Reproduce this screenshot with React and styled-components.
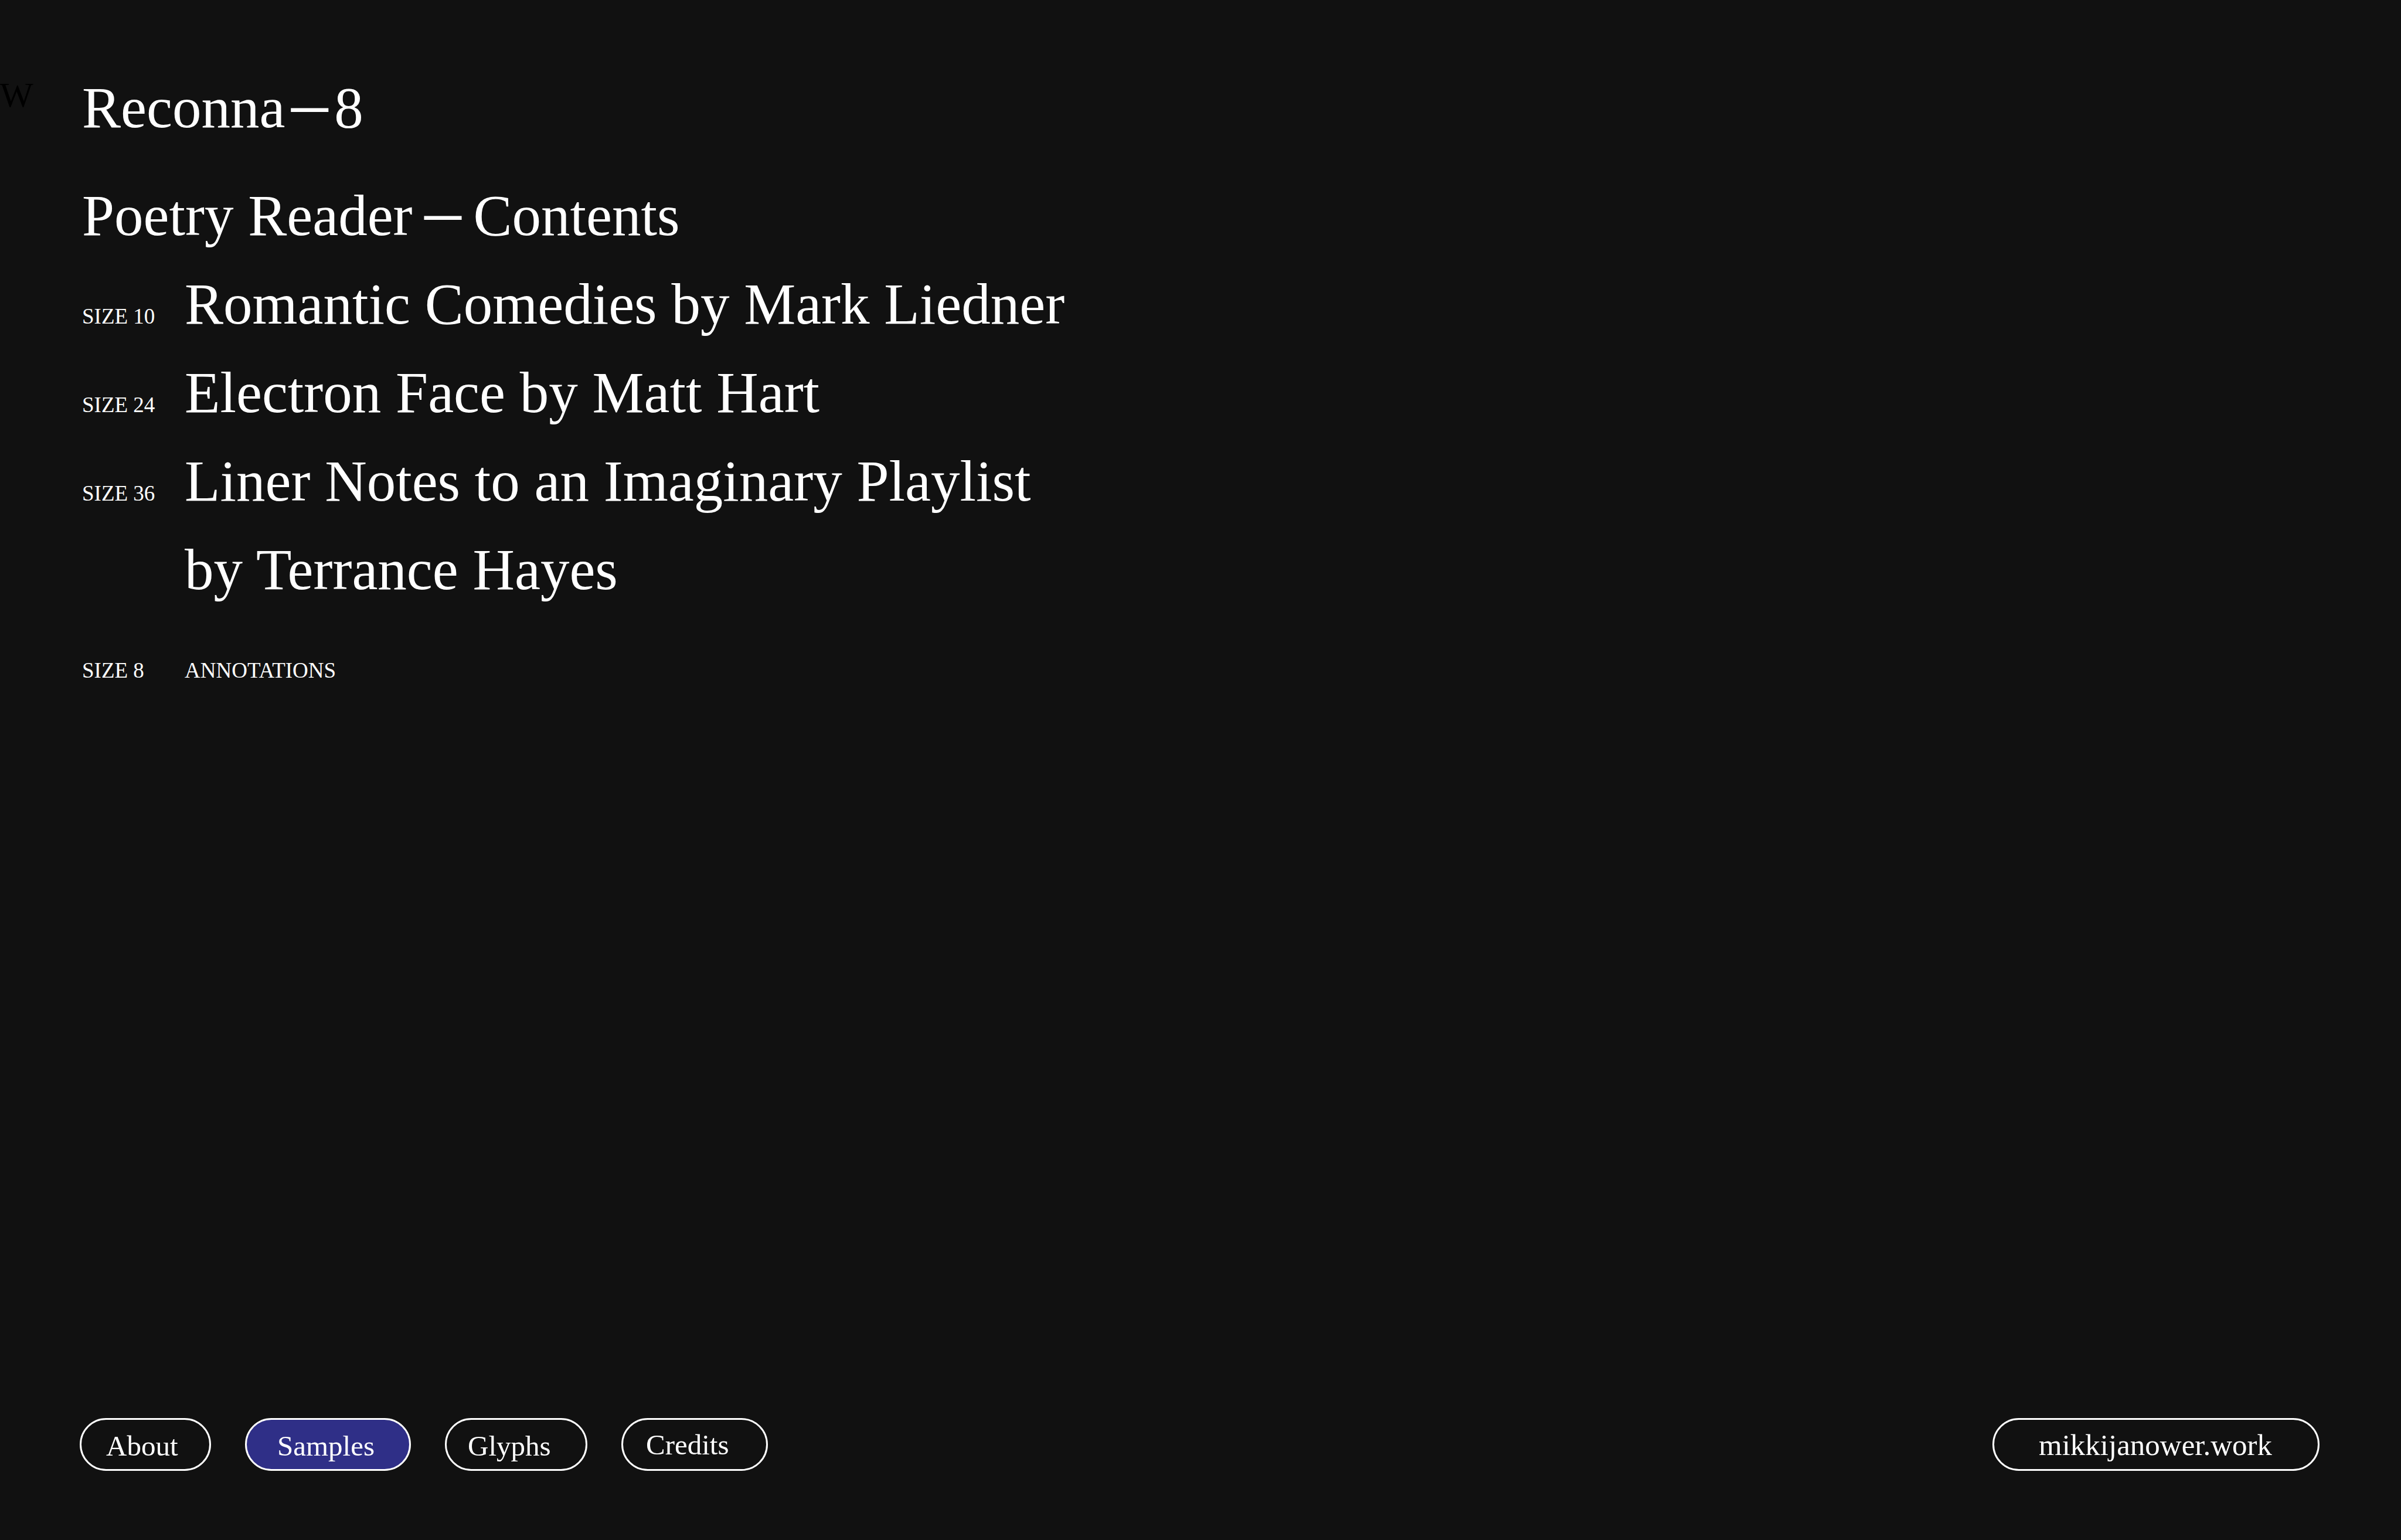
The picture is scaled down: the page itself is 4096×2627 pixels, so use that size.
import React from "react";
import styled, { createGlobalStyle } from "styled-components";

const GlobalStyle = createGlobalStyle`
  *, *::before, *::after { box-sizing: border-box; }
  body {
    margin: 0;
    background: #111111;
    color: #ffffff;
    font-family: "Liberation Serif", "Times New Roman", serif;
  }
`;

const Page = styled.div`
  min-height: 100vh;
  display: flex;
  flex-direction: column;
  padding: 108px 139px 118px 0;
`;

const Header = styled.header`
  display: grid;
  grid-template-columns: 140px 1fr;
  align-items: start;
`;

const Mark = styled.span`
  color: #000000;
  font-size: 60px;
  line-height: 108px;
`;

const Title = styled.h1`
  margin: 0;
  font-size: 99px;
  font-weight: 400;
  line-height: 151px;
`;

const Dash = styled.span`
  margin: 0 ${(p) => p.$space}px;
  font-family: "Liberation Sans", Arial, sans-serif;
  font-size: 64px;
  font-weight: 700;
  line-height: 1;
  vertical-align: 12px;
`;

const Contents = styled.main`
  padding: 33px 0 0 140px;
`;

const Heading = styled(Title).attrs({ as: "h2" })``;

const List = styled.ul`
  margin: 0;
  padding: 0;
  list-style: none;
  font-size: 99px;
  line-height: 151px;
`;

const Row = styled.li`
  display: grid;
  grid-template-columns: 175px 1fr;
  align-items: baseline;
`;

const Small = styled.span`
  font-size: 37px;
  line-height: 1;
`;

const Entry = styled.a`
  color: inherit;
  text-decoration: none;
`;

const Footer = styled.footer`
  margin-top: auto;
  padding-left: 136px;
  display: flex;
  justify-content: space-between;
`;

const Nav = styled.nav`
  display: flex;
  gap: 58px;
`;

const Pill = styled.a`
  width: ${(p) => p.$width}px;
  height: 90px;
  padding-left: ${(p) => p.$inset}px;
  border: 3px solid #ffffff;
  border-radius: 45px;
  background: ${(p) => (p.$active ? "#2f2f87" : "transparent")};
  color: inherit;
  font-size: ${(p) => (p.$wide ? 51 : 49)}px;
  line-height: ${(p) => (p.$raised ? 86 : 90)}px;
  text-decoration: none;
  white-space: nowrap;
`;

const entries = [
  { size: 10, text: "Romantic Comedies by Mark Liedner" },
  { size: 24, text: "Electron Face by Matt Hart" },
  {
    size: 36,
    text: (
      <>
        Liner Notes to an Imaginary Playlist
        <br />
        by Terrance Hayes
      </>
    ),
  },
  { size: 8, text: <Small>ANNOTATIONS</Small> },
];

const links = [
  { label: "About", width: 224, inset: 42 },
  { label: "Samples", width: 283, inset: 52, active: true },
  { label: "Glyphs", width: 243, inset: 36 },
  { label: "Credits", width: 250, inset: 39, raised: true },
];

export default function App() {
  return (
    <>
      <GlobalStyle />
      <Page>
        <Header>
          <Mark>W</Mark>
          <Title>
            Reconna<Dash $space={10}>—</Dash>8
          </Title>
        </Header>
        <Contents>
          <Heading>
            Poetry Reader<Dash $space={20}>—</Dash>Contents
          </Heading>
          <List>
            {entries.map((entry) => (
              <Row key={entry.size}>
                <Small>SIZE {entry.size}</Small>
                <div>
                  <Entry href={`#size-${entry.size}`}>{entry.text}</Entry>
                </div>
              </Row>
            ))}
          </List>
        </Contents>
        <Footer>
          <Nav>
            {links.map((link) => (
              <Pill
                key={link.label}
                href={`#${link.label.toLowerCase()}`}
                $width={link.width}
                $inset={link.inset}
                $active={link.active}
                $raised={link.raised}
              >
                {link.label}
              </Pill>
            ))}
          </Nav>
          <Pill href="#work" $width={558} $inset={76} $wide $raised>
            mikkijanower.work
          </Pill>
        </Footer>
      </Page>
    </>
  );
}
